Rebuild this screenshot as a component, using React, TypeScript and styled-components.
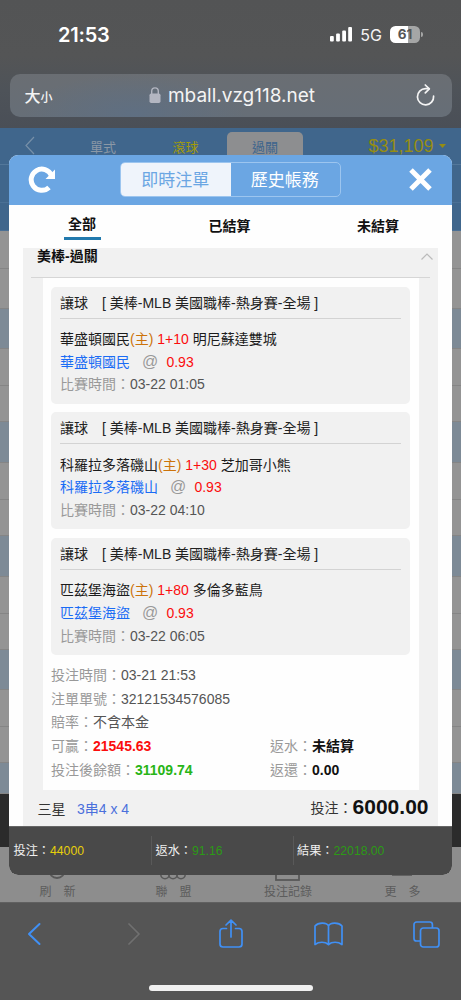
import React from 'react';
import styled, { createGlobalStyle } from 'styled-components';

const GlobalStyle = createGlobalStyle`
  *, *::before, *::after { box-sizing: border-box; }
  body { margin: 0; background: #555; }
  svg { display: block; flex: none; }
`;

const sans = `"Liberation Sans", "Noto Sans CJK TC", sans-serif`;
const ui = `Inter, "Noto Sans CJK TC", sans-serif`;

const Screen = styled.div`
  position: relative;
  display: flex;
  flex-direction: column;
  width: 461px;
  height: 1000px;
  overflow: hidden;
  font-family: ${sans};
  font-size: 14px;
  white-space: nowrap;
`;

/* Browser chrome */
const Chrome = styled.header`
  flex: none;
  height: 128px;
  padding: 0 9.5px;
  background: linear-gradient(#535455 0, #545556 56px, #4e5359 90px, #4a4f57 128px);
  color: #f4f4f4;
  font-family: ${ui};
`;

const StatusBar = styled.div`
  display: flex;
  align-items: center;
  justify-content: space-between;
  height: 74px;
  padding: 0 28.5px 5px 48.5px;
`;

const Clock = styled.div`
  color: #fff;
  font-size: 20px;
  font-weight: 600;
  letter-spacing: -0.2px;
`;

const StatusIcons = styled.div`
  display: flex;
  align-items: center;
  gap: 8px;
  font-size: 16px;
`;

const Battery = styled.div`
  display: flex;
  align-items: center;
  gap: 1px;
`;

const BatteryBody = styled.div`
  width: 30px;
  height: 17px;
  border-radius: 5.5px;
  background: linear-gradient(90deg, #fff 61%, #a5a6a6 61%);
  color: #555;
  font-size: 13.5px;
  font-weight: 700;
  line-height: 17px;
  text-align: center;
`;

const BatteryTip = styled.div`
  width: 2px;
  height: 5px;
  border-radius: 0 2px 2px 0;
  background: #a5a6a6;
`;

const AddressBar = styled.div`
  display: flex;
  align-items: center;
  justify-content: space-between;
  height: 42.5px;
  padding: 0 16px 0 15px;
  border-radius: 10px;
  background: radial-gradient(ellipse 110px 40px at 125px 40px, #5f6f82, transparent),
    linear-gradient(#6a6e73, #666e77);
`;

const TextSize = styled.div`
  width: 29px;
  font-size: 16px;
  font-weight: 500;
  small { font-size: 12px; }
`;

const Host = styled.div`
  display: flex;
  align-items: center;
  gap: 7px;
  margin-right: 6px;
  font-size: 19px;
`;

/* Dimmed page behind the dialog */
const Page = styled.main`
  flex: none;
  display: flex;
  flex-direction: column;
  height: 774px;
  background: #929292;
`;

const PageNav = styled.nav`
  display: grid;
  grid-template-columns: 62px 82px 83px 76px 158px;
  align-items: center;
  height: 37px;
  flex: none;
  background: #40668c;
  border-bottom: 1px solid #53779a;
  color: #8b98a6;
  font-size: 13px;
  text-align: center;
`;

const NavItem = styled.span<{ $hot?: boolean }>`
  color: ${(p) => (p.$hot ? '#a39a08' : 'inherit')};
`;

const NavTab = styled.span`
  align-self: end;
  height: 32px;
  padding-top: 5px;
  border-radius: 5px 5px 0 0;
  background: #8d8e90;
  color: #3c648d;
`;

const Balance = styled.span`
  display: flex;
  align-items: center;
  justify-content: flex-end;
  gap: 5px;
  padding: 1px 15.5px 0 0;
  color: #968d12;
  font-size: 18px;
`;

const NavBand = styled.div<{ $h: number }>`
  flex: none;
  height: ${(p) => p.$h}px;
  background: #40668c;
  border-bottom: 1px solid #4b7095;
`;

const Strip = styled.div<{ $h: number; $blue?: boolean }>`
  flex: none;
  height: ${(p) => p.$h}px;
  background: ${(p) => (p.$blue ? '#7d8a96' : '#949494')};
  border-bottom: 1px solid #858585;
`;

const DarkStrip = styled.div`
  flex: none;
  height: 53px;
  background: #2b2b2b;
`;

const PageTabs = styled.div`
  flex: 1;
  display: grid;
  grid-template-columns: 115px 117px 112px 117px;
  justify-items: center;
  align-content: end;
  padding-bottom: 1px;
  background: #8d8d8d;
  color: #5c5c5c;
  font-size: 12px;
`;

const PageTab = styled.div`
  display: flex;
  flex-direction: column;
  align-items: center;
  gap: 3px;
  line-height: 17px;
`;

/* Dialog */
const Dialog = styled.section`
  position: absolute;
  left: 9px;
  top: 155px;
  display: flex;
  flex-direction: column;
  width: 443px;
  height: 719.5px;
  border-radius: 9px;
  overflow: hidden;
  background: #fefefe;
`;

const DialogHead = styled.div`
  flex: none;
  display: grid;
  grid-template-columns: 92px 221px 91px;
  align-items: center;
  height: 49.5px;
  padding: 0 20px 0 19px;
  background: #6ba6e3;
`;

const Segments = styled.div`
  display: grid;
  grid-template-columns: 1fr 1fr;
  height: 35px;
  border: 1px solid #9cc5ef;
  border-radius: 5px;
  overflow: hidden;
`;

const Segment = styled.div<{ $on?: boolean }>`
  padding-right: 1px;
  background: ${(p) => (p.$on ? '#eff4fb' : 'transparent')};
  color: ${(p) => (p.$on ? '#6ba6e3' : '#fff')};
  font-size: 17px;
  line-height: 35px;
  text-align: center;
`;

const CloseIcon = styled.svg`
  justify-self: end;
`;

const Filters = styled.div`
  flex: none;
  display: grid;
  grid-template-columns: 146px 149px 148px;
  justify-items: center;
  height: 43.5px;
`;

const Filter = styled.div<{ $on?: boolean }>`
  height: ${(p) => (p.$on ? 35 : 40)}px;
  padding: 0 4.5px;
  border-bottom: ${(p) => (p.$on ? '3px solid #2179ad' : 'none')};
  color: #111;
  font-weight: 700;
  line-height: ${(p) => (p.$on ? 39 : 43)}px;
`;

const Scroller = styled.div`
  flex: 1;
  margin: 0 14px;
  background: #f1f1f1;
`;

const GroupHead = styled.div`
  display: flex;
  justify-content: space-between;
  height: 30px;
  margin: 0 8px;
  border-bottom: 1px solid #d6d6d6;
  color: #111;
  font-weight: 700;
  line-height: 17px;
  svg { margin-top: 5px; margin-right: -3px; }
`;

const GroupTitle = styled.span`
  padding-left: 6px;
`;

const Ticket = styled.div`
  height: 512px;
  margin: 0 19.5px 0 20px;
  padding: 8.5px 8.5px 0 8px;
  background: #fefefe;
`;

const Card = styled.article`
  height: 117px;
  margin-bottom: 8.8px;
  padding: 0 9px;
  border-radius: 5px;
  background: #f1f1f1;
`;

const CardTitle = styled.h3`
  height: 32px;
  margin: 0 0 9.4px;
  border-bottom: 1px solid #d3d3d3;
  color: #222;
  font-size: 14px;
  font-weight: 400;
  line-height: 32px;
`;

const Line = styled.div`
  height: 22.8px;
  color: #1c1c1c;
  line-height: 22.8px;
`;

const Tone = styled.span<{ $c: string; $bold?: boolean }>`
  color: ${(p) => p.$c};
  font-weight: ${(p) => (p.$bold ? 700 : 400)};
`;

const At = styled.span`
  margin: 0 8.2px 0 12px;
  color: #999;
  font-size: 16px;
`;

const Details = styled.div`
  display: grid;
  grid-template-columns: 219px 1fr;
  grid-auto-rows: 23.7px;
  line-height: 23.7px;
  color: #555;
`;

const Detail = styled.div<{ $wide?: boolean }>`
  grid-column: ${(p) => (p.$wide ? '1 / -1' : 'auto')};
`;

const Total = styled.div`
  display: flex;
  align-items: center;
  height: 35px;
  padding: 0 9.5px 0 14.5px;
  gap: 11.5px;
  color: #333;
`;

const Stake = styled.div`
  display: flex;
  align-items: center;
  margin-left: auto;
  height: 33px;
  padding-bottom: 2px;
  strong { color: #111; font-size: 21px; }
`;

const Summary = styled.footer`
  flex: none;
  display: grid;
  grid-template-columns: 142px 141.5px 1fr;
  align-items: center;
  height: 49px;
  border-top: 1px solid #666;
  background: #494949;
  color: #f0f0f0;
  font-size: 12.2px;
`;

const SummaryCell = styled.div`
  height: 29px;
  padding-left: 4.5px;
  line-height: 31px;
  & + & { border-left: 1px solid #595959; padding-left: 3.5px; }
`;

/* Browser toolbar */
const Toolbar = styled.nav`
  flex: 1;
  background: #555;
  border-top: 1px solid #606060;
`;

const Tools = styled.div`
  display: grid;
  grid-template-columns: repeat(5, 98px);
  place-items: center;
  justify-content: center;
  height: 62px;
`;

const HomeBar = styled.div`
  width: 164px;
  height: 6px;
  margin: 20px auto 0;
  border-radius: 3px;
  background: #f0f0f0;
`;

interface Bet { home: string; line: string; away: string; time: string }

const bets: Bet[] = [
  { home: '華盛頓國民', line: '1+10', away: '明尼蘇達雙城', time: '03-22 01:05' },
  { home: '科羅拉多落磯山', line: '1+30', away: '芝加哥小熊', time: '03-22 04:10' },
  { home: '匹茲堡海盜', line: '1+80', away: '多倫多藍鳥', time: '03-22 06:05' },
];

const BetCard = ({ home, line, away, time }: Bet) => (
  <Card>
    <CardTitle>讓球{'\u3000'}[ 美棒-MLB 美國職棒-熱身賽-全場 ]</CardTitle>
    <Line>{home}<Tone $c="#cc730b">(主)</Tone> <Tone $c="#fb0d0d">{line}</Tone> {away}</Line>
    <Line><Tone $c="#1a6cf5">{home}</Tone><At>@</At><Tone $c="#fb0d0d">0.93</Tone></Line>
    <Line><Tone $c="#999">比賽時間：</Tone><Tone $c="#555">{time}</Tone></Line>
  </Card>
);

const Label = ({ children }: { children: React.ReactNode }) => <Tone $c="#999">{children}</Tone>;

export default function App() {
  return (
    <>
      <GlobalStyle />
      <Screen>
        <Chrome>
          <StatusBar>
            <Clock>21:53</Clock>
            <StatusIcons>
              <svg width="22" height="15" viewBox="0 0 22 15" fill="#fff">
                <rect x="0" y="9" width="3.800" height="5.500" rx="1" />
                <rect x="6.100" y="6.500" width="3.800" height="8" rx="1" />
                <rect x="12.200" y="3.500" width="3.800" height="11" rx="1" />
                <rect x="18.200" y="0" width="3.800" height="14.500" rx="1" />
              </svg>
              <span>5G</span>
              <Battery><BatteryBody>61</BatteryBody><BatteryTip /></Battery>
            </StatusIcons>
          </StatusBar>
          <AddressBar>
            <TextSize>大<small>小</small></TextSize>
            <Host>
              <svg width="12" height="16" viewBox="0 0 12 16">
                <rect x="0.5" y="6.5" width="11" height="9.5" rx="1.7" fill="#b3b6c1" />
                <path d="M2.7 7V4.2a3.3 3.3 0 0 1 6.6 0V7" fill="none" stroke="#b3b6c1" strokeWidth="1.4" />
              </svg>
              <span>mball.vzg118.net</span>
            </Host>
            <svg width="19" height="22" viewBox="0 0 19 22" fill="none" stroke="#f4f4f4" strokeWidth="1.7" strokeLinecap="round" strokeLinejoin="round">
              <path d="M17.6 12.2A8.1 8.1 0 1 1 9.500 4.700H13" />
              <path d="M9.3 1l4 3.800-4 4" />
            </svg>
          </AddressBar>
        </Chrome>

        <Page>
          <PageNav>
            <svg width="62" height="20" viewBox="0 0 62 20" fill="none" stroke="#7790a8" strokeWidth="1.2">
              <path d="M34 1l-8 8.5 8 8.5" />
            </svg>
            <NavItem>單式</NavItem>
            <NavItem $hot>滾球</NavItem>
            <NavTab>過關</NavTab>
            <Balance>$31,109
              <svg width="7" height="5" viewBox="0 0 7 5"><path d="M0 0h7L3.500 4z" fill="#968d12" /></svg>
            </Balance>
          </PageNav>
          <NavBand $h={38} />
          <NavBand $h={28} />
          <Strip $h={38} />
          <Strip $h={39.5} />
          {[0, 1, 2, 3].map((i) => (
            <React.Fragment key={i}>
              <Strip $h={40.7} $blue />
              <Strip $h={37} />
              <Strip $h={36} />
            </React.Fragment>
          ))}
          <Strip $h={31} $blue />
          <DarkStrip />
          <PageTabs>
            <PageTab>
              <svg width="18" height="18" viewBox="0 0 18 18" fill="none" stroke="#585858" strokeWidth="1.8"><circle cx="9" cy="7" r="8" /></svg>
              <span>刷　新</span>
            </PageTab>
            <PageTab>
              <svg width="26" height="18" viewBox="0 0 26 18" fill="none" stroke="#585858" strokeWidth="1.6">
                <circle cx="5" cy="11.500" r="4.200" /><circle cx="13" cy="11.500" r="4.200" /><circle cx="21" cy="11.500" r="4.200" />
              </svg>
              <span>聯　盟</span>
            </PageTab>
            <PageTab>
              <svg width="25" height="18" viewBox="0 0 25 18" fill="none" stroke="#585858" strokeWidth="1.8"><rect x="1" y="0" width="23" height="17" /></svg>
              <span>投注記錄</span>
            </PageTab>
            <PageTab>
              <svg width="22" height="18" viewBox="0 0 22 18" stroke="#585858" strokeWidth="2"><path d="M1 11.800h20" /></svg>
              <span>更　多</span>
            </PageTab>
          </PageTabs>
        </Page>

        <Toolbar>
          <Tools>
            <svg width="16" height="24" viewBox="0 0 16 24" fill="none" stroke="#4090f5" strokeWidth="2" strokeLinecap="round" strokeLinejoin="round"><path d="M12.500 2L2 12l10.500 10" /></svg>
            <svg width="14" height="24" viewBox="0 0 14 24" fill="none" stroke="#707070" strokeWidth="1.7" strokeLinecap="round" strokeLinejoin="round"><path d="M3 2l10 10-10 10" /></svg>
            <svg width="24" height="30" viewBox="0 0 24 30" fill="none" stroke="#4090f5" strokeWidth="1.7" strokeLinecap="round" strokeLinejoin="round">
              <path d="M7.500 9.500H4a3 3 0 0 0-3 3V25a3 3 0 0 0 3 3h16a3 3 0 0 0 3-3V12.500a3 3 0 0 0-3-3h-3.500M12 18V1.500M7 6l5-4.800L17 6" />
            </svg>
            <svg width="29" height="24" viewBox="0 0 29 24" fill="none" stroke="#4090f5" strokeWidth="1.7" strokeLinejoin="round">
              <path d="M14.500 4C13 .5 4.500 0 1 4V22.500c4-3 10-3 13.500 0C18 19.500 24 19.500 28 22.500V4C24.500 0 16 .5 14.500 4zV22.500" />
            </svg>
            <svg width="27" height="27" viewBox="0 0 27 27" fill="none" stroke="#4090f5" strokeWidth="1.7" strokeLinejoin="round">
              <rect x="7.500" y="7" width="18.500" height="19" rx="2.800" />
              <path d="M7.500 20H3.500a2.600 2.600 0 0 1-2.500-2.600V3.600A2.600 2.600 0 0 1 3.600 1h13.200a2.600 2.600 0 0 1 2.600 2.600V7" />
            </svg>
          </Tools>
          <HomeBar />
        </Toolbar>

        <Dialog>
          <DialogHead>
            <svg width="28" height="28" viewBox="0 0 28 28" fill="none">
              <path d="M23.500 9.500A10.600 10.600 0 1 0 21 21.500" stroke="#fff" strokeWidth="5" />
              <path d="M27 3.500V13H17.500z" fill="#fff" />
            </svg>
            <Segments>
              <Segment $on>即時注單</Segment>
              <Segment>歷史帳務</Segment>
            </Segments>
            <CloseIcon width="23" height="23" viewBox="0 0 23 23" stroke="#fff" strokeWidth="5"><path d="M2 2l19 19M21 2L2 21" /></CloseIcon>
          </DialogHead>
          <Filters>
            <Filter $on>全部</Filter>
            <Filter>已結算</Filter>
            <Filter>未結算</Filter>
          </Filters>
          <Scroller>
            <GroupHead>
              <GroupTitle>美棒-過關</GroupTitle>
              <svg width="12" height="8" viewBox="0 0 12 8" fill="none" stroke="#bbb" strokeWidth="1.2"><path d="M.5 6.500L6 1l5.500 5.500" /></svg>
            </GroupHead>
            <Ticket>
              {bets.map((b) => <BetCard key={b.time} {...b} />)}
              <Details>
                <Detail $wide><Label>投注時間：</Label>03-21 21:53</Detail>
                <Detail $wide><Label>注單單號：</Label>32121534576085</Detail>
                <Detail $wide><Label>賠率：</Label>不含本金</Detail>
                <Detail><Label>可贏：</Label><Tone $c="#fb0d0d" $bold>21545.63</Tone></Detail>
                <Detail><Label>返水：</Label><Tone $c="#111" $bold>未結算</Tone></Detail>
                <Detail><Label>投注後餘額：</Label><Tone $c="#28b516" $bold>31109.74</Tone></Detail>
                <Detail><Label>返還：</Label><Tone $c="#111" $bold>0.00</Tone></Detail>
              </Details>
            </Ticket>
            <Total>
              <span>三星</span>
              <Tone $c="#4b70dc">3串4 x 4</Tone>
              <Stake>投注：<strong>6000.00</strong></Stake>
            </Total>
          </Scroller>
          <Summary>
            <SummaryCell>投注：<Tone $c="#e6cf0b">44000</Tone></SummaryCell>
            <SummaryCell>返水：<Tone $c="#2c9a15">91.16</Tone></SummaryCell>
            <SummaryCell>結果：<Tone $c="#2c9a15">22018.00</Tone></SummaryCell>
          </Summary>
        </Dialog>
      </Screen>
    </>
  );
}
